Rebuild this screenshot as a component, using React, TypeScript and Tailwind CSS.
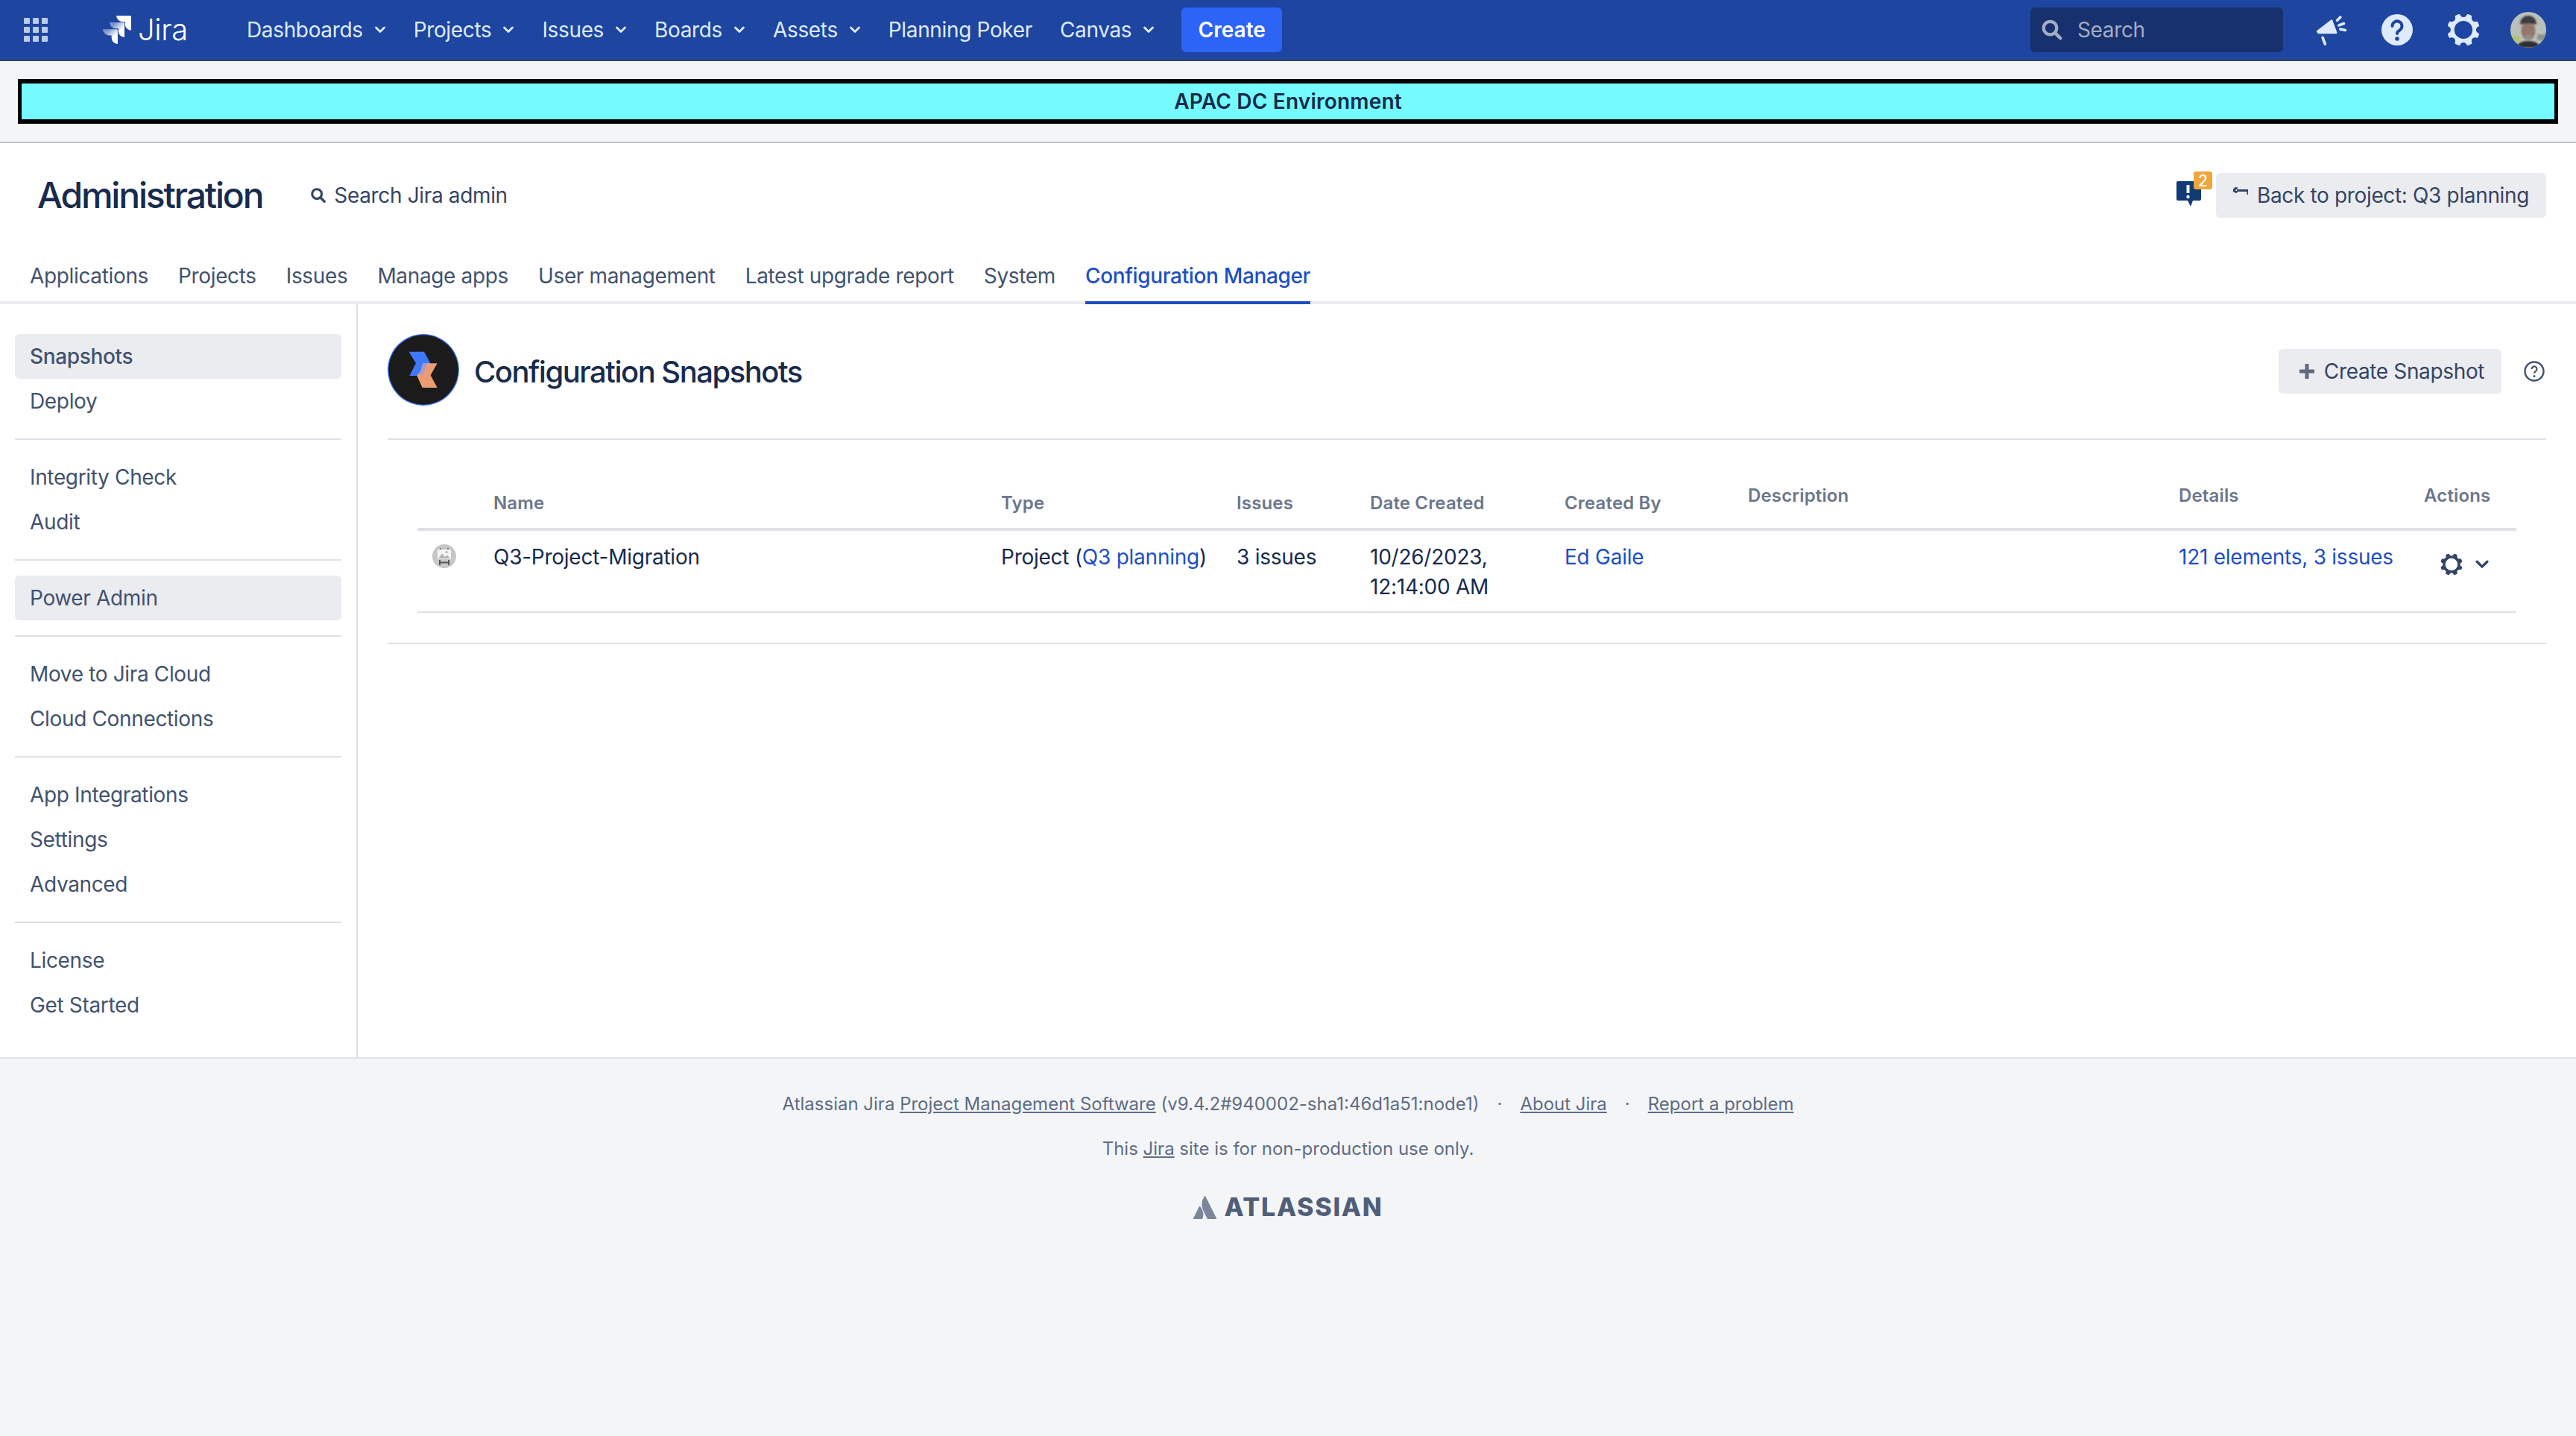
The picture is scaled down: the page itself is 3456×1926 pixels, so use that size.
import { ReactNode } from "react";

const navItems = [
  { label: "Dashboards", caret: true },
  { label: "Projects", caret: true },
  { label: "Issues", caret: true },
  { label: "Boards", caret: true },
  { label: "Assets", caret: true },
  { label: "Planning Poker", caret: false },
  { label: "Canvas", caret: true },
];

const adminTabs = [
  "Applications",
  "Projects",
  "Issues",
  "Manage apps",
  "User management",
  "Latest upgrade report",
  "System",
];

const sideGroups = [
  ["Snapshots", "Deploy"],
  ["Integrity Check", "Audit"],
  ["Power Admin"],
  ["Move to Jira Cloud", "Cloud Connections"],
  ["App Integrations", "Settings", "Advanced"],
  ["License", "Get Started"],
];

const sideClass = (label: string) => {
  if (label === "Snapshots") return "flex h-[60px] items-center rounded-[6px] bg-[#ebecf0] pl-[20px] font-medium";
  if (label === "Power Admin") return "flex h-[60px] items-center rounded-[6px] bg-[#ebecf0] pl-[20px]";
  return "flex h-[60px] items-center pl-[20px]";
};

const GEAR =
  "M11.701 16.7a5.002 5.002 0 1 1 0-10.003 5.002 5.002 0 0 1 0 10.004m8.368-3.117a1.995 1.995 0 0 1-1.346-1.885c0-.876.563-1.613 1.345-1.885a.48.48 0 0 0 .315-.574 8.947 8.947 0 0 0-.836-1.993.477.477 0 0 0-.598-.195 2.04 2.04 0 0 1-1.29.08 1.988 1.988 0 0 1-1.404-1.395 2.04 2.04 0 0 1 .076-1.297.478.478 0 0 0-.196-.597 8.98 8.98 0 0 0-1.975-.826.479.479 0 0 0-.574.314 1.995 1.995 0 0 1-1.885 1.346 1.994 1.994 0 0 1-1.884-1.345.482.482 0 0 0-.575-.315c-.708.2-1.379.485-2.004.842a.47.47 0 0 0-.198.582A2.002 2.002 0 0 1 4.445 7.06a.478.478 0 0 0-.595.196 8.946 8.946 0 0 0-.833 1.994.48.48 0 0 0 .308.572 1.995 1.995 0 0 1 1.323 1.877c0 .867-.552 1.599-1.324 1.877a.479.479 0 0 0-.308.57 8.99 8.99 0 0 0 .723 1.79.477.477 0 0 0 .624.194c.595-.273 1.343-.264 2.104.238.117.077.225.185.302.3.527.8.512 1.58.198 2.188a.473.473 0 0 0 .168.628 8.946 8.946 0 0 0 2.11.897.474.474 0 0 0 .57-.313 1.995 1.995 0 0 1 1.886-1.353c.878 0 1.618.567 1.887 1.353a.475.475 0 0 0 .57.313 8.964 8.964 0 0 0 2.084-.883.473.473 0 0 0 .167-.631c-.318-.608-.337-1.393.191-2.195.077-.116.185-.225.302-.302.772-.511 1.527-.513 2.125-.23a.477.477 0 0 0 .628-.19 8.925 8.925 0 0 0 .728-1.793.48.48 0 0 0-.314-.573";

const Caret = ({ className }: { className: string }) => (
  <svg viewBox="0 0 16 16" className={className} fill="none">
    <path d="M2.500 5 8 10.500 13.500 5" stroke="currentColor" strokeWidth="2.800" strokeLinecap="round" strokeLinejoin="round" />
  </svg>
);

const Gear = ({ className }: { className: string }) => (
  <svg viewBox="2.6 2.6 18.2 18.2" className={className}>
    <path d={GEAR} fill="currentColor" fillRule="evenodd" />
  </svg>
);

const SearchGlyph = ({ className }: { className: string }) => (
  <svg viewBox="0 0 24 24" className={className} fill="none">
    <circle cx="10" cy="10" r="7" stroke="currentColor" strokeWidth="3.4" />
    <path d="M15.5 15.5 21 21" stroke="currentColor" strokeWidth="3.6" strokeLinecap="round" />
  </svg>
);

const AppGrid = () => (
  <div className="grid w-[32px] grid-cols-3 gap-[4px]">
    {Array.from({ length: 9 }).map((_, i) => (
      <span key={i} className="h-[8px] w-[8px] rounded-[1px] bg-[#bccbea]" />
    ))}
  </div>
);

const JiraMark = () => (
  <svg viewBox="0 0 24 24" className="h-[38px] w-[38px]">
    <defs>
      <linearGradient id="jiraB" x1="0.85" y1="0.45" x2="0.4" y2="0">
        <stop offset="0" stopColor="#ffffff" />
        <stop offset="1" stopColor="#7d94cc" />
      </linearGradient>
    </defs>
    <path fill="url(#jiraB)" d="M11.571 11.513H0a5.218 5.218 0 0 0 5.232 5.215h2.13v2.057A5.215 5.215 0 0 0 12.575 24V12.518a1.005 1.005 0 0 0-1.005-1.005z" />
    <path fill="url(#jiraB)" d="M17.296 5.757H5.736a5.215 5.215 0 0 0 5.215 5.214h2.129v2.058a5.218 5.218 0 0 0 5.215 5.214V6.758a1.001 1.001 0 0 0-1-1.001z" />
    <path fill="#ffffff" d="M23.013 0H11.455a5.215 5.215 0 0 0 5.215 5.215h2.129v2.057A5.215 5.215 0 0 0 24 12.483V1.005A1.001 1.001 0 0 0 23.013 0z" />
  </svg>
);

const Megaphone = () => (
  <svg viewBox="135 55 135 130" className="h-[43px] w-[45px]" fill="#deebff">
    <path d="M148 125 204 82 222 130H152z" stroke="#deebff" strokeWidth="9" strokeLinejoin="round" />
    <g stroke="#deebff" strokeWidth="11" strokeLinecap="round" fill="none">
      <path d="M168 150 178 176" />
      <path d="M227 80 240 67" />
      <path d="M234 100 254 93" />
      <path d="M240 116 260 120" />
    </g>
  </svg>
);

const HelpFilled = () => (
  <svg viewBox="0 0 42 42" className="h-[42px] w-[42px]">
    <circle cx="21" cy="21" r="21" fill="#deebff" />
    <path d="M14.5 16a6.5 6.5 0 1 1 10 5.4c-2.2 1.4-3.5 2.2-3.5 4.6" fill="none" stroke="#1e459f" strokeWidth="4" strokeLinecap="round" />
    <circle cx="21" cy="33" r="2.8" fill="#1e459f" />
  </svg>
);

const Avatar = () => (
  <svg viewBox="0 0 48 48" className="h-[48px] w-[48px] rounded-full">
    <defs>
      <filter id="avatarBlur">
        <feGaussianBlur stdDeviation="1" />
      </filter>
    </defs>
    <rect width="48" height="48" fill="#bcc0bb" />
    <g filter="url(#avatarBlur)">
      <rect x="2" y="32" width="10" height="8" fill="#b4c468" />
      <rect x="36" y="30" width="12" height="8" fill="#8e958c" />
      <path d="M8 48c2-7 8-9 16-9s14 2 16 9z" fill="#2f2e30" />
      <ellipse cx="24" cy="25" rx="9.500" ry="13" fill="#94776a" />
      <ellipse cx="24" cy="34" rx="5" ry="3.500" fill="#8f8f8a" />
      <path d="M13 17c0-9 6-12 11-12s11 3 11 12c-6-2-16-2-22 0z" fill="#3a3c40" />
    </g>
  </svg>
);

const ProductIcon = () => (
  <svg viewBox="60 54 288 288" className="h-[96px] w-[96px] shrink-0">
    <circle cx="204" cy="198" r="144" fill="#3f74ee" />
    <circle cx="204" cy="198" r="140" fill="#1b1b1b" />
    <path d="M146 125H207L232 171 205 222H148L174 172z" fill="#3f78fb" />
    <path d="M215 172H260L233 220 260 270H200L178 222z" fill="#ec9c74" />
    <path d="M202 172H220L200 219H187z" fill="#a79bc8" />
  </svg>
);

const ImagePlaceholder = () => (
  <svg viewBox="0 0 32 32" className="h-[32px] w-[32px]">
    <circle cx="16" cy="16" r="16" fill="#c6c6c6" />
    <rect x="7" y="7" width="18" height="13" fill="#f4f4f4" />
    <path d="M8 19 13 12.5 17 17 20 14.5 24 19z" fill="#b4b4b4" />
    <circle cx="19" cy="10.5" r="1.6" fill="#b4b4b4" />
    <path d="M10 21V28M22 21V28M10 24.5H22" stroke="#555555" strokeWidth="2" fill="none" />
    <path d="M11 5V7M21 5V7" stroke="#555555" strokeWidth="1.5" />
  </svg>
);

const NoticeBubble = () => (
  <div className="relative -mt-[2px] mr-[6px] h-[47px] w-[47px] shrink-0 self-start">
    <svg viewBox="0 0 33 34" className="absolute bottom-0 left-0 h-[34px] w-[33px]">
      <path d="M2 0H31a2 2 0 0 1 2 2V24a2 2 0 0 1-2 2H22L19 34 15 26H2a2 2 0 0 1-2-2V2a2 2 0 0 1 2-2z" fill="#123a75" />
      <path d="M15.5 5V16" stroke="#ffffff" strokeWidth="4" />
      <circle cx="15.5" cy="21" r="2.2" fill="#ffffff" />
    </svg>
    <span className="absolute right-[-1px] top-0 flex h-[24px] w-[25px] items-center justify-center rounded-[3px] bg-[#f0a63a] text-[21px] font-medium leading-none tracking-normal text-white">
      2
    </span>
  </div>
);

const AtlassianMark = () => (
  <svg viewBox="0 0 24 24" className="h-[31px] w-[31px]">
    <path fill="#7a869a" d="M7.12 11.084a.683.683 0 00-1.16.126L.075 22.974a.703.703 0 00.63 1.018h8.19a.678.678 0 00.63-.39c1.767-3.65.696-9.203-2.406-12.52zM11.434.386a15.515 15.515 0 00-.906 15.317l3.95 7.9a.703.703 0 00.628.388h8.19a.703.703 0 00.63-1.017L12.63.38a.664.664 0 00-1.196.006z" />
  </svg>
);

const TopNav = () => (
  <header className="flex h-[82px] items-center border-b-2 border-[#344563] bg-[#1e459f] pr-[40px] text-[28px] text-[#deebff]">
    <div className="ml-[32px]">
      <AppGrid />
    </div>
    <div className="ml-[74px] flex items-center gap-[9px]">
      <JiraMark />
      <span className="text-[40px] font-light leading-none text-white">Jira</span>
    </div>
    <nav className="ml-[79px] flex items-center gap-[37px]">
      {navItems.map((item) => (
        <a key={item.label} className="flex items-center gap-[15px]">
          {item.label}
          {item.caret && <Caret className="h-[16px] w-[16px]" />}
        </a>
      ))}
    </nav>
    <button className="ml-[36px] h-[60px] w-[135px] rounded-[6px] bg-[#2c64f5] font-semibold tracking-normal text-white">
      Create
    </button>
    <div className="ml-auto flex h-[60px] w-[339px] items-center rounded-[6px] bg-[#17316f] pl-[14px] text-[#a3acc2]">
      <SearchGlyph className="h-[30px] w-[30px]" />
      <span className="ml-[19px]">Search</span>
    </div>
    <div className="ml-[42px] flex items-center">
      <Megaphone />
      <div className="ml-[45px]">
        <HelpFilled />
      </div>
      <Gear className="ml-[46px] h-[44px] w-[44px] text-[#deebff]" />
      <div className="ml-[41px]">
        <Avatar />
      </div>
    </div>
  </header>
);

const AdminHeader = () => (
  <section className="border-b-4 border-[#ebecf0] bg-white px-[40px] pt-[40px]">
    <div className="flex h-[60px] items-center">
      <h1 className="ml-[10px] text-[48px] font-medium leading-none tracking-[-2.2px] text-[#172b4d]">
        Administration
      </h1>
      <div className="ml-[64px] flex items-center gap-[10px] text-[28px] text-[#344563]">
        <SearchGlyph className="h-[22px] w-[22px]" />
        Search Jira admin
      </div>
      <div className="ml-auto flex h-full items-center">
        <NoticeBubble />
        <button className="flex h-[60px] w-[443px] items-center justify-center gap-[12px] rounded-[6px] bg-[#ebecf0] text-[28px] text-[#344563]">
          <svg viewBox="0 0 20 12" className="mb-[10px] h-[12px] w-[20px]" fill="none">
            <path d="M20 4.5H5M5.500 0 0 4.500 5.500 7M20 3V10" stroke="#344563" strokeWidth="3" />
          </svg>
          Back to project: Q3 planning
        </button>
      </div>
    </div>
    <nav className="mt-[44px] flex h-[68px] gap-[40px] text-[28px] text-[#42526e]">
      {adminTabs.map((tab) => (
        <a key={tab} className="flex items-center">
          {tab}
        </a>
      ))}
      <a className="-mb-[4px] flex items-center border-b-4 border-[#1d4fc4] pb-0 font-medium text-[#1d4fc4]">
        Configuration Manager
      </a>
    </nav>
  </section>
);

const Sidebar = () => (
  <aside className="w-[480px] shrink-0 border-r-2 border-[#dfe1e6] pb-[40px] pl-[20px] pr-[20px] pt-[40px] text-[28px] text-[#42526e]">
    {sideGroups.map((group, i) => (
      <div key={i} className={i > 0 ? "mt-[20px] border-t-2 border-[#dfe1e6] pt-[20px]" : ""}>
        {group.map((label) => (
          <a key={label} className={sideClass(label)}>
            {label}
          </a>
        ))}
      </div>
    ))}
  </aside>
);

const Th = ({ children, top }: { children: ReactNode; top?: boolean }) => (
  <th
    className={
      top
        ? "border-b-4 border-[#dfe1e6] px-[20px] pb-0 pt-[6px] text-left align-top text-[24px] font-semibold leading-[30px] tracking-[0.15px] text-[#6b778c]"
        : "border-b-4 border-[#dfe1e6] px-[20px] pb-[18px] text-left align-bottom text-[24px] font-semibold leading-[30px] tracking-[0.15px] text-[#6b778c]"
    }
  >
    {children}
  </th>
);

const Td = ({ children }: { children?: ReactNode }) => (
  <td className="border-b-2 border-[#dfe1e6] px-[20px] pb-[13px] pt-[15px] align-top">{children}</td>
);

const SnapshotTable = () => (
  <table className="mx-[40px] mt-[54px] w-[2816px] table-fixed border-separate border-spacing-0 text-[28px] leading-[40px] tracking-[-0.25px] text-[#172b4d]">
    <colgroup>
      <col className="w-[82px]" />
      <col className="w-[681px]" />
      <col className="w-[316px]" />
      <col className="w-[179px]" />
      <col className="w-[261px]" />
      <col className="w-[246px]" />
      <col className="w-[578px]" />
      <col className="w-[329px]" />
      <col className="w-[144px]" />
    </colgroup>
    <thead>
      <tr className="h-[68px]">
        <Th> </Th>
        <Th>Name</Th>
        <Th>Type</Th>
        <Th>Issues</Th>
        <Th>Date Created</Th>
        <Th>Created By</Th>
        <Th top>Description</Th>
        <Th top>Details</Th>
        <Th top>Actions</Th>
      </tr>
    </thead>
    <tbody>
      <tr>
        <Td>
          <div className="pt-[3px]">
            <ImagePlaceholder />
          </div>
        </Td>
        <Td>Q3-Project-Migration</Td>
        <Td>
          <span className="whitespace-nowrap">
            Project (<a className="text-[#1d4fc4]">Q3 planning</a>)
          </span>
        </Td>
        <Td>3 issues</Td>
        <Td>
          10/26/2023,
          <br />
          <span className="whitespace-nowrap">12:14:00 AM</span>
        </Td>
        <Td>
          <a className="text-[#1d4fc4]">Ed Gaile</a>
        </Td>
        <Td />
        <Td>
          <a className="whitespace-nowrap text-[#1d4fc4]">121 elements, 3 issues</a>
        </Td>
        <Td>
          <div className="ml-[22px] mt-[15px] flex items-center gap-[16px] text-[#344563]">
            <Gear className="h-[30px] w-[30px]" />
            <Caret className="h-[20px] w-[20px]" />
          </div>
        </Td>
      </tr>
    </tbody>
  </table>
);

const MainContent = () => (
  <main className="min-w-0 flex-1">
    <div className="mx-[40px] mt-[40px] flex h-[142px] items-start border-b-2 border-[#dfe1e6]">
      <ProductIcon />
      <h2 className="ml-[20px] mt-[27px] text-[40px] font-medium leading-[48px] tracking-[-1.5px] text-[#172b4d]">
        Configuration Snapshots
      </h2>
      <button className="ml-auto mt-[20px] flex h-[60px] w-[299px] items-center justify-center gap-[12px] rounded-[6px] bg-[#ebecf0] pl-[4px] text-[28px] text-[#344563]">
        <svg viewBox="0 0 22 22" className="h-[22px] w-[22px]">
          <path d="M11 1V21M1 11H21" stroke="#5f6b7d" strokeWidth="5" />
        </svg>
        Create Snapshot
      </button>
      <svg viewBox="0 0 28 28" className="ml-[30px] mr-[2px] mt-[36px] h-[28px] w-[28px]" fill="none">
        <circle cx="14" cy="14" r="12.500" stroke="#42526e" strokeWidth="2.400" />
        <path d="M10.500 11a3.500 3.500 0 1 1 5.400 2.900c-1.200.8-1.900 1.300-1.900 2.800" stroke="#42526e" strokeWidth="2.200" />
        <circle cx="14" cy="20.500" r="1.500" fill="#42526e" />
      </svg>
    </div>
    <div className="px-[40px]">
      <SnapshotTable />
    </div>
    <div className="mx-[40px] mt-[40px] border-b-2 border-[#dfe1e6]" />
  </main>
);

const Footer = () => (
  <footer className="flex flex-1 flex-col items-center border-t-2 border-[#dfe1e6] bg-[#f4f5f7] pt-[43px] text-[24px] leading-[36px] tracking-normal text-[#5e6c84]">
    <p className="whitespace-nowrap">
      Atlassian Jira <a className="underline">Project Management Software</a> (v9.4.2#940002-sha1:46d1a51:node1)
      <span className="mx-[24px]">·</span>
      <a className="underline">About Jira</a>
      <span className="mx-[24px]">·</span>
      <a className="underline">Report a problem</a>
    </p>
    <p className="mt-[24px]">
      This <a className="underline">Jira</a> site is for non-production use only.
    </p>
    <div className="mt-[43px] flex items-center gap-[11px]">
      <AtlassianMark />
      <span className="text-[34px] font-extrabold leading-none tracking-[1.7px] text-[#505f79]">ATLASSIAN</span>
    </div>
  </footer>
);

export default function App() {
  return (
    <div className="flex min-h-screen flex-col bg-white tracking-[-0.35px] [font-family:Inter,'Noto_Sans',sans-serif]">
      <TopNav />
      <div className="border-b-2 border-[#c1c7d0] bg-[#f4f5f7] p-[24px]">
        <div className="flex h-[60px] items-center justify-center border-x-[5px] border-y-[6px] border-black bg-[#75fbff] text-[28px] font-semibold tracking-[0.2px] text-[#172b4d]">
          APAC DC Environment
        </div>
      </div>
      <AdminHeader />
      <div className="flex">
        <Sidebar />
        <MainContent />
      </div>
      <Footer />
    </div>
  );
}
